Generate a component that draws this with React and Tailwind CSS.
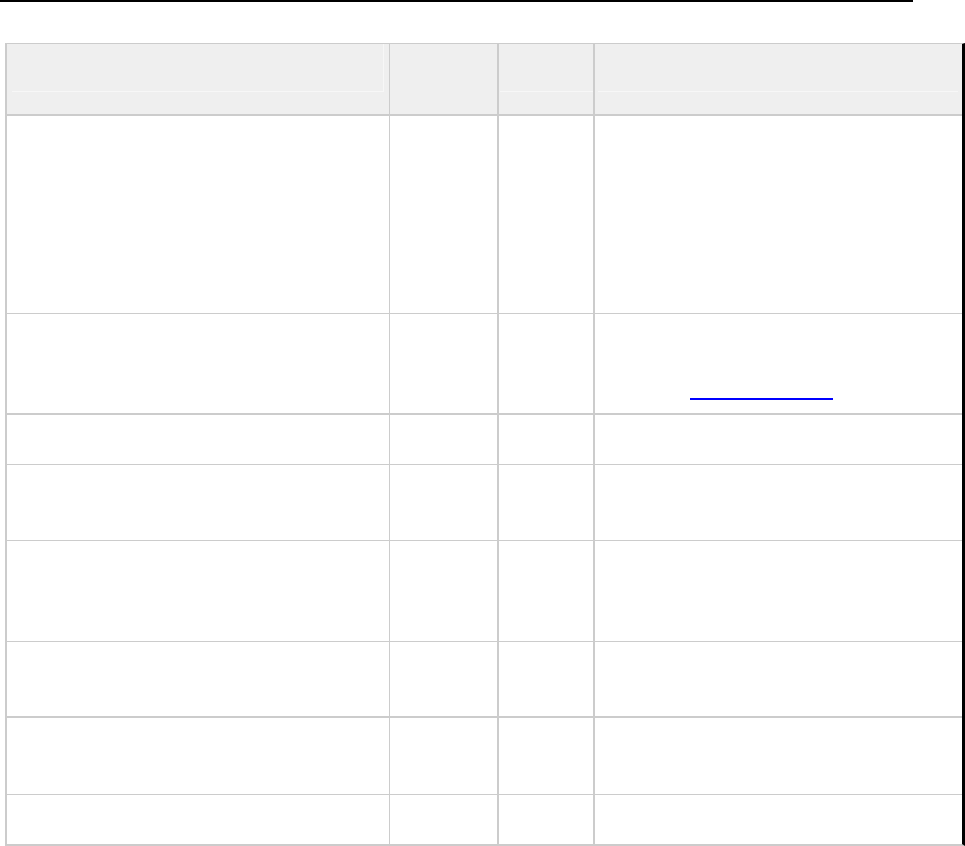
import React from 'react';

const rows = [
  { h: 'h-[198px]', b: 'border-b' },
  { h: 'h-[101px]', b: 'border-b-2', link: true },
  { h: 'h-[50px]', b: 'border-b' },
  { h: 'h-[76px]', b: 'border-b' },
  { h: 'h-[101px]', b: 'border-b' },
  { h: 'h-[76px]', b: 'border-b-2' },
  { h: 'h-[77px]', b: 'border-b' },
  { h: 'h-[49px]', b: '' },
];

const App = () => {
  return (
    <div className="w-[965px] h-[846px] bg-white overflow-hidden" style={{ fontFamily: '"Liberation Sans", Arial, sans-serif' }}>
      <div className="h-[2px] w-[913px] bg-black" />
      <div className="mt-[41px] ml-[5px] w-[960px] border-l-2 border-t border-b-2 border-r-[3px] border-l-[#cccccc] border-t-[#cccccc] border-b-[#cccccc] border-r-black">
        {/* header */}
        <div className="flex h-[72px] bg-[#efefef] border-b-2 border-[#cccccc]">
          <div className="w-[383px] border-r border-[#cccccc] pl-[5px]">
            <div className="w-[372px] h-[48px] border-r border-b border-[#f7f7f7]" />
          </div>
          <div className="w-[109px] border-r-2 border-[#cccccc]" />
          <div className="w-[96px] border-r-2 border-[#cccccc] pl-[1px]">
            <div className="h-[48px] border-b border-[#f7f7f7]" />
          </div>
          <div className="flex-1 pl-[3px] pr-[4px]">
            <div className="h-[48px] border-b border-[#f7f7f7]" />
          </div>
        </div>
        {rows.map((r, i) => (
          <div key={i} className={`flex ${r.h} ${r.b} border-[#cccccc]`}>
            <div className="w-[383px] border-r border-[#cccccc]" />
            <div className="w-[109px] border-r-2 border-[#cccccc]" />
            <div className="w-[96px] border-r-2 border-[#cccccc]" />
            <div className="flex-1">
              {r.link && (
                <a href="#" className="block mt-[84px] ml-[95px] w-[143px] h-[2px] bg-[#0000ff]" />
              )}
            </div>
          </div>
        ))}
      </div>
    </div>
  );
};

export default App;
